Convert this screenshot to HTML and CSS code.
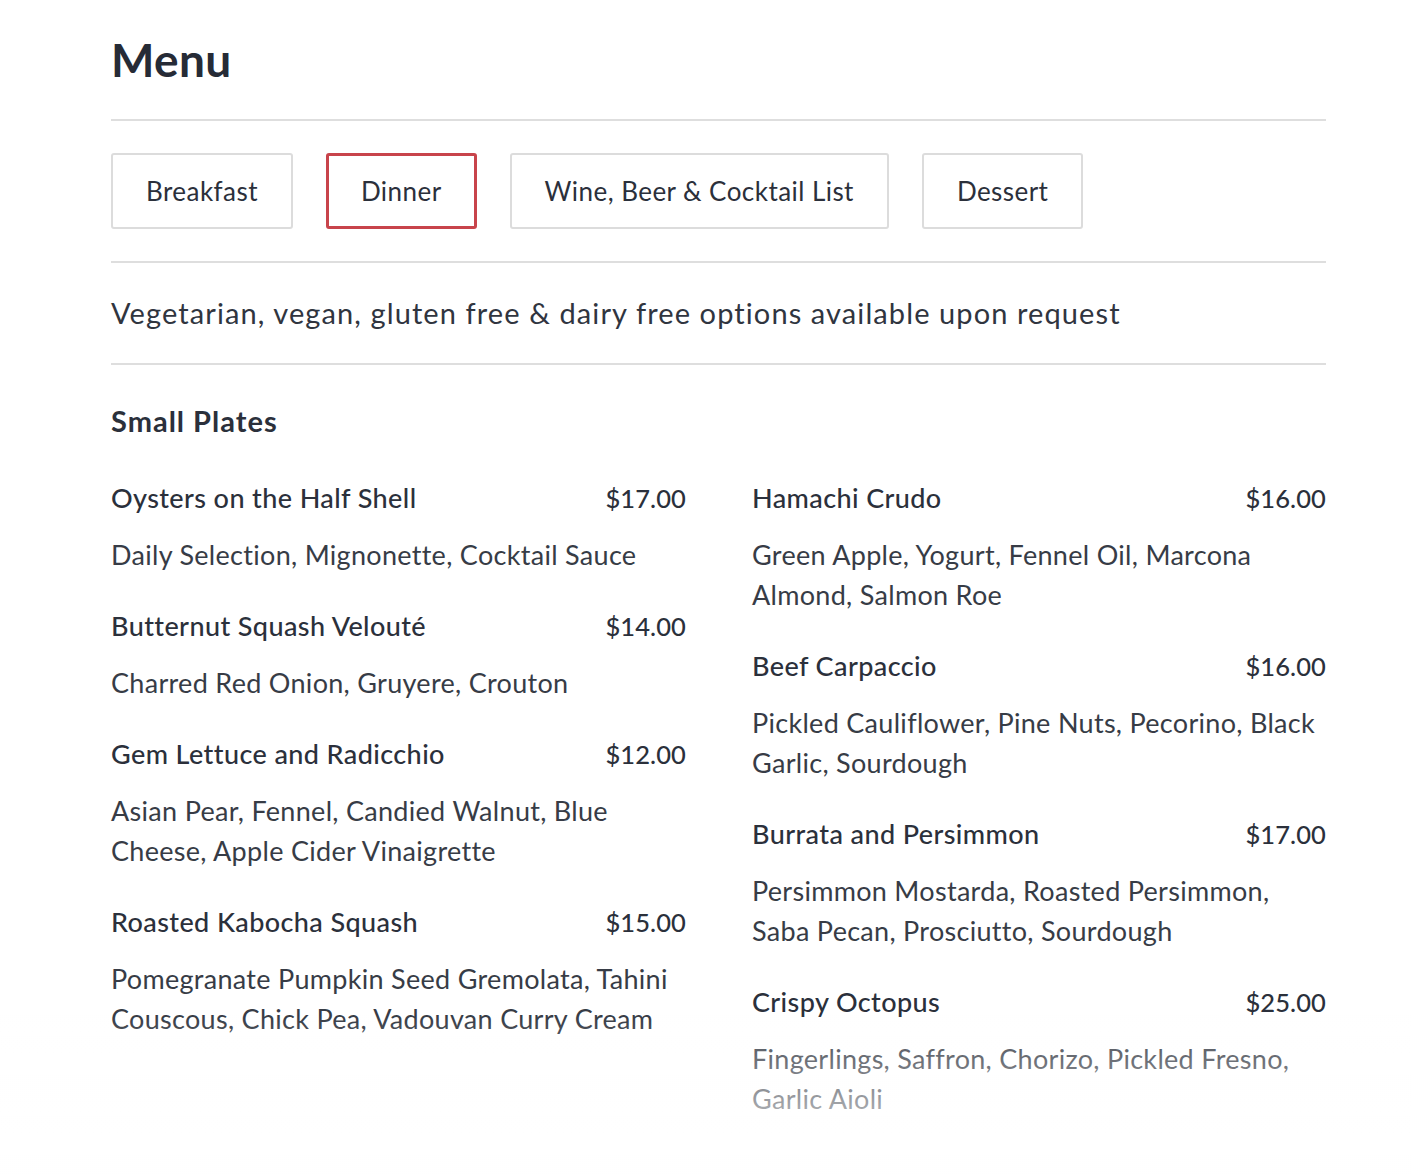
FILE: index.html
```html
<!DOCTYPE html>
<html lang="en">
<head>
<meta charset="utf-8">
<title>Menu</title>
<link rel="stylesheet" href="styles.css">
</head>
<body>
<main class="menu">
  <h1 class="menu-title">Menu</h1>
  <hr class="rule">
  <nav class="tabs">
    <button class="tab">Breakfast</button>
    <button class="tab tab-active">Dinner</button>
    <button class="tab">Wine, Beer &amp; Cocktail List</button>
    <button class="tab">Dessert</button>
  </nav>
  <hr class="rule">
  <p class="note">Vegetarian, vegan, gluten free &amp; dairy free options available upon request</p>
  <hr class="rule">
  <h2 class="section-title">Small Plates</h2>
  <div class="columns">
    <div class="column">
      <div class="item">
        <div class="item-head"><span class="item-name">Oysters on the Half Shell</span><span class="item-price">$17.00</span></div>
        <p class="item-desc">Daily Selection, Mignonette, Cocktail Sauce</p>
      </div>
      <div class="item">
        <div class="item-head"><span class="item-name">Butternut Squash Velouté</span><span class="item-price">$14.00</span></div>
        <p class="item-desc">Charred Red Onion, Gruyere, Crouton</p>
      </div>
      <div class="item">
        <div class="item-head"><span class="item-name">Gem Lettuce and Radicchio</span><span class="item-price">$12.00</span></div>
        <p class="item-desc">Asian Pear, Fennel, Candied Walnut, Blue Cheese, Apple Cider Vinaigrette</p>
      </div>
      <div class="item">
        <div class="item-head"><span class="item-name">Roasted Kabocha Squash</span><span class="item-price">$15.00</span></div>
        <p class="item-desc">Pomegranate Pumpkin Seed Gremolata, Tahini Couscous, Chick Pea, Vadouvan Curry Cream</p>
      </div>
    </div>
    <div class="column">
      <div class="item">
        <div class="item-head"><span class="item-name">Hamachi Crudo</span><span class="item-price">$16.00</span></div>
        <p class="item-desc">Green Apple, Yogurt, Fennel Oil, Marcona Almond, Salmon Roe</p>
      </div>
      <div class="item">
        <div class="item-head"><span class="item-name">Beef Carpaccio</span><span class="item-price">$16.00</span></div>
        <p class="item-desc">Pickled Cauliflower, Pine Nuts, Pecorino, Black Garlic, Sourdough</p>
      </div>
      <div class="item">
        <div class="item-head"><span class="item-name">Burrata and Persimmon</span><span class="item-price">$17.00</span></div>
        <p class="item-desc">Persimmon Mostarda, Roasted Persimmon, Saba Pecan, Prosciutto, Sourdough</p>
      </div>
      <div class="item">
        <div class="item-head"><span class="item-name">Crispy Octopus</span><span class="item-price">$25.00</span></div>
        <p class="item-desc">Fingerlings, Saffron, Chorizo, Pickled Fresno, Garlic Aioli</p>
      </div>
    </div>
  </div>
</main>
<div class="fade"></div>
</body>
</html>
```
FILE: styles.css
```css
html, body {
  margin: 0;
  padding: 0;
  background: #ffffff;
}
body {
  font-family: Lato, "Open Sans", "Liberation Sans", sans-serif;
  color: #2b303b;
}
.menu {
  width: 1215px;
  margin-left: 111px;
  padding-top: 28px;
}
.menu-title {
  margin: 0;
  font-size: 46px;
  line-height: 64px;
  font-weight: 700;
  color: #262b36;
  letter-spacing: 0.3px;
}
.rule {
  border: 0;
  border-top: 2px solid #dedede;
  margin: 0;
}
.menu-title + .rule {
  margin-top: 27px;
}
.tabs {
  display: flex;
  gap: 33px;
  padding: 32px 0 32px;
}
.tab {
  font-family: inherit;
  font-size: 26px;
  letter-spacing: 0.45px;
  color: #2b303b;
  background: #fff;
  border: 2px solid #dcdcdc;
  border-radius: 3px;
  height: 76px;
  padding: 0 33px;
  font-weight: 400;
}
.tab-active {
  border: 3px solid #c8444b;
  padding: 0 32px;
}
.note {
  margin: 0;
  padding: 30px 0 30px;
  font-size: 29px;
  line-height: 40px;
  font-weight: 400;
  color: #30353f;
  letter-spacing: 1.1px;
}
.section-title {
  margin: 0;
  padding-top: 36px;
  font-size: 29px;
  line-height: 40px;
  font-weight: 700;
  letter-spacing: 1px;
  color: #2b303b;
}
.columns {
  display: grid;
  grid-template-columns: 575px 574px;
  column-gap: 66px;
  margin-top: 37px;
}
.item-head {
  display: flex;
  justify-content: space-between;
  font-size: 27px;
  line-height: 40px;
  font-weight: 500;
  letter-spacing: 0.4px;
  color: #2b303b;
}
.item-price {
  font-weight: 500;
  font-size: 25.5px;
  letter-spacing: 0.1px;
}
.item-desc {
  margin: 17px 0 31px;
  font-size: 27px;
  line-height: 40px;
  font-weight: 400;
  letter-spacing: 0.3px;
  color: #373c46;
}
.fade {
  position: fixed;
  left: 0;
  right: 0;
  bottom: 0;
  height: 160px;
  background: linear-gradient(to bottom, rgba(255,255,255,0), rgba(255,255,255,0.95));
  pointer-events: none;
}
```
